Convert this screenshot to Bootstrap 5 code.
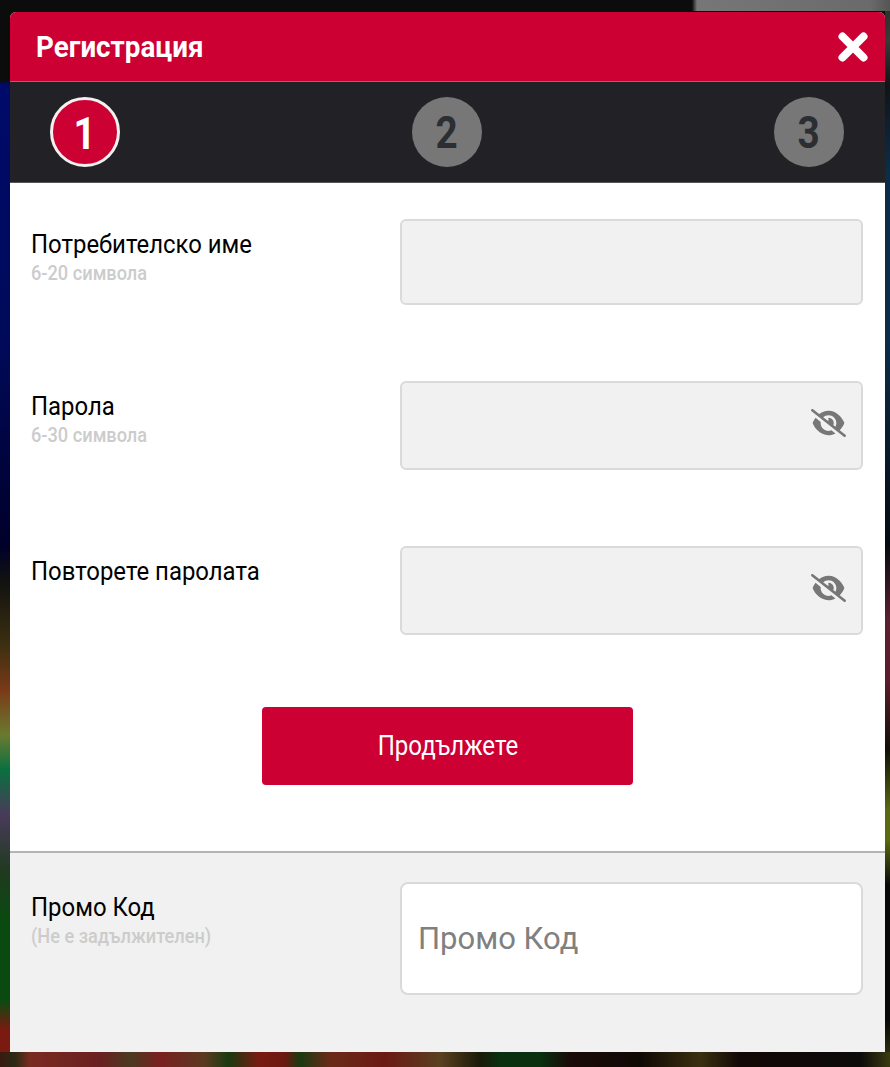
<!DOCTYPE html>
<html lang="bg">
<head>
<meta charset="utf-8">
<link href="https://cdn.jsdelivr.net/npm/bootstrap@5.3.0/dist/css/bootstrap.min.css" rel="stylesheet">
<style>
html,body{height:100%}
body{margin:0;overflow:hidden;font-family:"Roboto","Liberation Sans",sans-serif;padding:12px 5px 0 10px;height:1067px;background-color:#0c0c0c;background-repeat:no-repeat;
 background-image:
 linear-gradient(90deg,transparent 692px,#777 697px,#6a6a6a 870px,#555 890px),
 linear-gradient(90deg,#3a1a10 0,#2a2a14 15px,#7a2a20 30px,#6a2020 100px,#4a3a20 130px,#7a2020 160px,#5a3a20 205px,#1a3a10 228px,#7a1a10 260px,#6a1a10 285px,#1a3a10 300px,#6a2a18 330px,#6a1a14 385px,#5a4020 440px,#1a1a08 480px,#0a3010 500px,#0a3010 540px,#1a0a08 570px,#100804 640px,#3a3010 700px,#120806 740px,#0c0a0a 860px,#3a3a10 890px),
 linear-gradient(180deg,#2a2a2a 0,#3a3a3a 40px,#101418 85px,#0c2c48 170px,#0c2c48 340px,#050a10 545px,#5a2030 620px,#5a1c2c 680px,#101008 750px,#5a6a10 810px,#5a6a10 840px,#080808 885px,#080808 1020px,#3a3a10 1067px),
 linear-gradient(180deg,#0c0c0c 0,#0c0c0c 80px,#000a6a 85px,#000a5a 340px,#00002a 545px,#111 580px,#3c3010 646px,#7a3a18 690px,#6a7a30 735px,#0a7040 770px,#4a3a5a 815px,#203a20 870px,#0a4a10 920px,#0a4a10 1000px,#7a1a10 1030px,#7a1a10 1067px);
 background-size:100% 11px,100% 15px,5px 100%,10px 100%;
 background-position:0 0,0 100%,100% 0,0 0;}
.reg-sheet{width:875px;height:1040px;display:flex;flex-direction:column;background:#fff;border-radius:6px 6px 0 0;overflow:hidden}
.reg-head{height:70px;flex:none;background:#cc0033;border-bottom:1px solid #d84a68;padding:0 17px 0 26px}
.reg-title{font-size:30px;font-weight:700;color:#fff;margin:0;line-height:70px;display:inline-block;transform:scaleX(.926);transform-origin:left center}
.reg-close{width:30px;height:30px;padding:0;border:0;background:none;line-height:0}
.reg-steps{height:101px;flex:none;background:#222226;padding:15px 41px 0 40px;border-bottom:1px solid #55555a}
.reg-dot{width:70px;height:70px;border-radius:50%;background:#777;color:#2b2e33;font-size:44px;font-weight:700;line-height:72px;text-align:center}
.reg-dot-on{background:#cc0033;color:#fff;border:3px solid #f4f0f0;line-height:68px}
.reg-dot span{display:inline-block;transform:scaleX(.88)}
.reg-body{flex:1 1 auto;padding:36px 22px 0 21px}
.reg-field{display:flex;align-items:flex-start}
.reg-gap{margin-bottom:76px}
.reg-label{width:369px;flex:none;padding-top:7px}
.reg-name{display:block;font-size:26px;line-height:36px;color:#000;transform:scaleX(.92);transform-origin:left center;white-space:nowrap}
.reg-hint{display:block;font-size:20px;font-weight:500;line-height:22px;color:#ccc;transform:scaleX(.91);transform-origin:left center;white-space:nowrap}
.reg-box{flex:1 1 auto;position:relative}
.reg-input{height:86px;background:#f1f1f1;border:2px solid #dadada;border-radius:6px;box-shadow:none}
.reg-tall{height:89px}
.reg-eye{position:absolute;right:17px;top:28px;width:35px;height:28px;fill:#777}
.reg-send{display:block;width:371px;height:78px;margin:72px 0 0 231px;background:#cc0033;border:0;border-radius:4px;color:#fff;font-size:27px;padding:0}
.reg-send span{display:inline-block;transform:scaleX(.89)}
.reg-promo{height:201px;flex:none;background:#f1f1f1;border-top:2px solid #b4b4b4;padding:29px 22px 0 21px}
.reg-code{height:113px;background:#fff;border:2px solid #dadada;border-radius:8px;font-size:31px;padding:0 16px;color:#777}
.reg-code::placeholder{color:#808080;opacity:1}
</style>
</head>
<body>
<div class="reg-sheet">
  <div class="reg-head d-flex align-items-center justify-content-between">
    <h1 class="reg-title">Регистрация</h1>
    <button type="button" class="reg-close" aria-label="Затвори">
      <svg width="30" height="30" viewBox="0 0 30 30"><path d="M4.5 4.5 25.5 25.5M25.5 4.5 4.5 25.5" stroke="#fff" stroke-width="8" stroke-linecap="round"/></svg>
    </button>
  </div>
  <div class="reg-steps d-flex justify-content-between">
    <div class="reg-dot reg-dot-on"><span>1</span></div>
    <div class="reg-dot"><span>2</span></div>
    <div class="reg-dot"><span>3</span></div>
  </div>
  <div class="reg-body">
    <div class="reg-field reg-gap">
      <div class="reg-label"><span class="reg-name">Потребителско име</span><span class="reg-hint">6-20 символа</span></div>
      <div class="reg-box"><input type="text" class="form-control reg-input" aria-label="Потребителско име"></div>
    </div>
    <div class="reg-field reg-gap">
      <div class="reg-label"><span class="reg-name">Парола</span><span class="reg-hint">6-30 символа</span></div>
      <div class="reg-box"><input type="password" class="form-control reg-input reg-tall" aria-label="Парола">
        <svg class="reg-eye" viewBox="0 0 640 512"><path d="M38.8 5.1C28.4-3.1 13.3-1.2 5.1 9.2S-1.2 34.7 9.2 42.9l592 464c10.4 8.2 25.5 6.3 33.7-4.1s6.3-25.5-4.1-33.7L525.6 386.7c39.6-40.6 66.4-86.1 79.9-118.4c3.3-7.9 3.3-16.7 0-24.6c-14.9-35.7-46.2-87.7-93-131.1C465.5 68.8 400.8 32 320 32c-68.2 0-125 26.3-169.3 60.8L38.8 5.1zM223.1 149.5C248.6 126.2 282.7 112 320 112c79.5 0 144 64.5 144 144c0 24.9-6.3 48.3-17.4 68.7L408 294.5c8.4-19.3 10.6-41.4 4.8-63.3c-11.1-41.5-47.8-69.4-88.6-71.1c-5.8-.2-9.2 6.1-7.4 11.7c2.1 6.4 3.3 13.2 3.3 20.3c0 10.2-2.4 19.8-6.6 28.3l-90.3-70.8zM373 389.9c-16.4 6.5-34.3 10.1-53 10.1c-79.5 0-144-64.5-144-144c0-6.9 .5-13.6 1.4-20.2L83.1 161.5C60.3 191.2 44 220.8 34.5 243.7c-3.3 7.9-3.3 16.7 0 24.6c14.9 35.7 46.2 87.7 93 131.1C174.5 443.2 239.2 480 320 480c47.8 0 89.9-12.9 126.2-32.5L373 389.9z"/></svg>
      </div>
    </div>
    <div class="reg-field">
      <div class="reg-label"><span class="reg-name">Повторете паролата</span></div>
      <div class="reg-box"><input type="password" class="form-control reg-input reg-tall" aria-label="Повторете паролата">
        <svg class="reg-eye" viewBox="0 0 640 512"><path d="M38.8 5.1C28.4-3.1 13.3-1.2 5.1 9.2S-1.2 34.7 9.2 42.9l592 464c10.4 8.2 25.5 6.3 33.7-4.1s6.3-25.5-4.1-33.7L525.6 386.7c39.6-40.6 66.4-86.1 79.9-118.4c3.3-7.9 3.3-16.7 0-24.6c-14.9-35.7-46.2-87.7-93-131.1C465.5 68.8 400.8 32 320 32c-68.2 0-125 26.3-169.3 60.8L38.8 5.1zM223.1 149.5C248.6 126.2 282.7 112 320 112c79.5 0 144 64.5 144 144c0 24.9-6.3 48.3-17.4 68.7L408 294.5c8.4-19.3 10.6-41.4 4.8-63.3c-11.1-41.5-47.8-69.4-88.6-71.1c-5.8-.2-9.2 6.1-7.4 11.7c2.1 6.4 3.3 13.2 3.3 20.3c0 10.2-2.4 19.8-6.6 28.3l-90.3-70.8zM373 389.9c-16.4 6.5-34.3 10.1-53 10.1c-79.5 0-144-64.5-144-144c0-6.9 .5-13.6 1.4-20.2L83.1 161.5C60.3 191.2 44 220.8 34.5 243.7c-3.3 7.9-3.3 16.7 0 24.6c14.9 35.7 46.2 87.7 93 131.1C174.5 443.2 239.2 480 320 480c47.8 0 89.9-12.9 126.2-32.5L373 389.9z"/></svg>
      </div>
    </div>
    <button type="button" class="btn reg-send"><span>Продължете</span></button>
  </div>
  <div class="reg-promo">
    <div class="reg-field">
      <div class="reg-label"><span class="reg-name">Промо Код</span><span class="reg-hint">(Не е задължителен)</span></div>
      <div class="reg-box"><input type="text" class="form-control reg-code" placeholder="Промо Код"></div>
    </div>
  </div>
</div>
<script src="https://cdn.jsdelivr.net/npm/bootstrap@5.3.0/dist/js/bootstrap.bundle.min.js"></script>
</body>
</html>
